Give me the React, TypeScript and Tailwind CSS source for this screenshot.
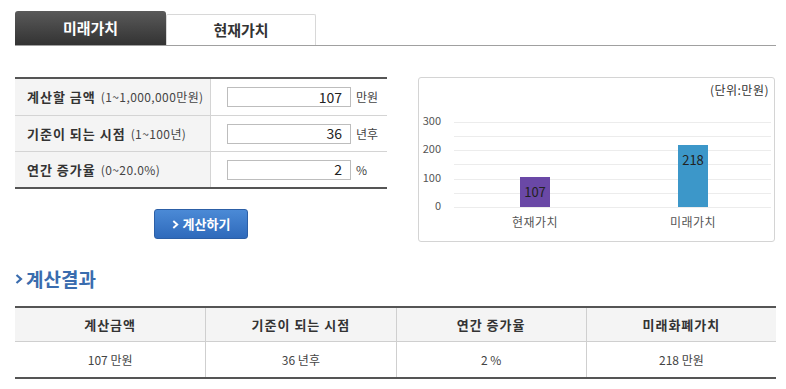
const font = { fontFamily: '"Noto Sans CJK KR", "Noto Sans", sans-serif' }

const inputs = [
  { label: '계산할 금액', range: '(1~1,000,000만원)', value: '107', unit: '만원' },
  { label: '기준이 되는 시점', range: '(1~100년)', value: '36', unit: '년후' },
  { label: '연간 증가율', range: '(0~20.0%)', value: '2', unit: '%' },
]

const results = [
  { head: '계산금액', value: '107 만원' },
  { head: '기준이 되는 시점', value: '36 년후' },
  { head: '연간 증가율', value: '2 %' },
  { head: '미래화폐가치', value: '218 만원' },
]

function Chart() {
  const grid = [44, 58, 72, 86, 101, 115, 129]
  const ticks = [
    { y: 44, t: '300' },
    { y: 72, t: '200' },
    { y: 101, t: '100' },
    { y: 129, t: '0' },
  ]
  return (
    <div className="relative h-[165px] w-[357px] rounded-[3px] border border-[#d4d4d4] bg-white">
      <div className="flex justify-end pr-[5px] pt-[4px] text-[12px] leading-[16px] tracking-[0.5px] text-[#333]">(단위:만원)</div>
      <svg className="absolute left-0 top-0" width="357" height="165" style={font}>
        {grid.map((y) => (
          <line key={y} x1="35" x2="352" y1={y + 0.5} y2={y + 0.5} stroke="#ececec" strokeWidth="1" />
        ))}
        {ticks.map((k) => (
          <text key={k.t} x="22" y={k.y + 3} textAnchor="end" fontSize="11" fill="#555">
            {k.t}
          </text>
        ))}
        <rect x="101" y="99" width="30" height="30" fill="#6a48a6" />
        <rect x="259" y="67" width="30" height="62" fill="#3c97c9" />
        <text x="116" y="119" textAnchor="middle" fontSize="13" fill="#222">107</text>
        <text x="274" y="87" textAnchor="middle" fontSize="13" fill="#222">218</text>
        <text x="116" y="149" textAnchor="middle" fontSize="12" letterSpacing="0.5" fill="#555">현재가치</text>
        <text x="274" y="149" textAnchor="middle" fontSize="12" letterSpacing="0.5" fill="#555">미래가치</text>
      </svg>
    </div>
  )
}

function Chevron({ className }: { className: string }) {
  return (
    <svg className={className} viewBox="0 0 8 10" fill="none">
      <path d="M1.5 1 L6 5 L1.5 9" stroke="currentColor" strokeWidth="2.2" />
    </svg>
  )
}

export default function App() {
  return (
    <div className="min-h-[389px] bg-white pl-[15px] pr-[10px] pt-[11px] text-[#333]" style={font}>
      {/* tabs */}
      <div className="flex items-end border-b border-[#a0a0a0]">
        <div className="flex h-[34px] w-[151px] items-center justify-center rounded-t-[3px] bg-gradient-to-b from-[#5a5a5a] to-[#333] text-[15px] font-bold text-white">
          미래가치
        </div>
        <div className="flex h-[31px] w-[150px] items-center justify-center rounded-t-[2px] border border-b-0 border-[#d8d8d8] bg-white text-[15px] font-bold text-[#333]">
          현재가치
        </div>
      </div>

      <div className="mt-[31px] flex gap-[31px]">
        <div className="w-[372px]">
          <div className="border-y-[2px] border-[#555]">
            {inputs.map((r, i) => (
              <div key={r.label} className={`flex h-[36px] ${i > 0 ? 'border-t border-[#d4d4d4]' : ''}`}>
                <div className="flex w-[196px] items-center border-r border-[#d4d4d4] bg-[#f4f4f4] pl-[12px]">
                  <span className="text-[13px] font-bold tracking-[1px] text-[#333]">{r.label}</span>
                  <span className="ml-[5px] text-[12px] tracking-[0.4px] text-[#444]">{r.range}</span>
                </div>
                <div className="flex items-center pl-[16px]">
                  <div className="flex h-[20px] w-[124px] items-center justify-end border border-[#bdbdbd] pr-[8px] text-[14px] text-[#222]">
                    {r.value}
                  </div>
                  <span className="ml-[5px] text-[12px] text-[#444]">{r.unit}</span>
                </div>
              </div>
            ))}
          </div>
          <div className="mt-[20px] flex justify-center">
            <button className="flex h-[30px] w-[94px] items-center justify-center gap-[4px] rounded-[3px] border border-[#2c5fa6] bg-gradient-to-b from-[#4b8ad6] to-[#2f6abb] text-[13px] font-bold text-white">
              <Chevron className="h-[9px] w-[7px]" />
              계산하기
            </button>
          </div>
        </div>
        <Chart />
      </div>

      <div className="mt-[25px] flex items-center gap-[3px] text-[#3a6cae]">
        <Chevron className="h-[12px] w-[8px]" />
        <span className="text-[19px] font-bold leading-[24px]">계산결과</span>
      </div>

      <div className="mt-[15px] grid w-[761px] grid-cols-4 border-y-[2px] border-[#555] text-[12px]">
        {results.map((r, i) => (
          <div
            key={'h' + r.head}
            className={`flex h-[34px] items-center justify-center border-b border-[#cfcfcf] bg-[#f4f4f4] text-[13px] font-bold tracking-[1px] ${i > 0 ? 'border-l' : ''}`}
          >
            {r.head}
          </div>
        ))}
        {results.map((r, i) => (
          <div
            key={'v' + r.head}
            className={`flex h-[35px] items-center justify-center border-[#cfcfcf] text-[#444] ${i > 0 ? 'border-l' : ''}`}
          >
            {r.value}
          </div>
        ))}
      </div>
    </div>
  )
}
